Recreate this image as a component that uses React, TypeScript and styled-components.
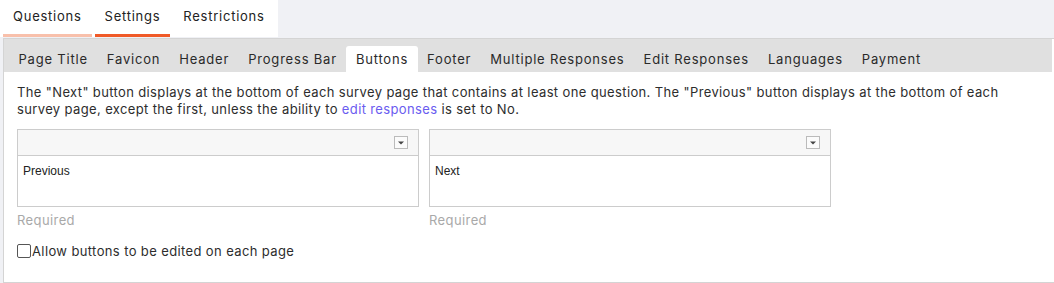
import styled, { createGlobalStyle } from "styled-components";

const GlobalStyle = createGlobalStyle`
  html, body {
    margin: 0;
    padding: 0;
    background: #f0f1f5;
    font-family: Inter, "Noto Sans", sans-serif;
    color: #333;
  }
`;

const Page = styled.div`
  width: 1054px;
  height: 283px;
  overflow: hidden;
`;

const TopTabs = styled.div`
  display: inline-flex;
  background: #fff;
  height: 37px;
  padding-right: 3px;
`;

const TopTab = styled.div<{ $active?: boolean; $dim?: boolean }>`
  margin-left: 3px;
  padding: 0 10px;
  display: flex;
  align-items: center;
  font-size: 13px;
  letter-spacing: 0.75px;
  color: #222;
  border-bottom: 3px solid
    ${(p) => (p.$active ? "#f05a28" : p.$dim ? "#f8c0ab" : "transparent")};
  padding-bottom: 2px;
`;

const Panel = styled.div`
  margin-left: 3px;
  margin-top: 1px;
  border: 1px solid #d4d4d4;
  border-right: none;
  background: #fff;
  height: 243px;
`;

const SubTabs = styled.div`
  display: flex;
  background: #e0e0e0;
  padding: 7px 0 0 5px;
  height: 26px;
  margin-right: 2px;
`;

const SubTab = styled.div<{ $active?: boolean }>`
  padding: 0 9.5px;
  display: flex;
  align-items: center;
  font-size: 13px;
  letter-spacing: 0.8px;
  color: #2a2a2a;
  background: ${(p) => (p.$active ? "#fff" : "transparent")};
  border-radius: 3px 3px 0 0;
`;

const Body = styled.div`
  padding: 12px 13px 0 13px;
`;

const Description = styled.p`
  margin: 0;
  font-size: 13px;
  line-height: 17px;
  letter-spacing: 0.37px;
  color: #2d2d2d;

  a {
    color: #6a5cf0;
    text-decoration: none;
  }
`;

const Editors = styled.div`
  display: flex;
  gap: 10px;
  margin-top: 11px;
`;

const EditorField = styled.div`
  width: 402px;
`;

const Editor = styled.div`
  border: 1px solid #ccc;
  height: 76px;
  display: flex;
  flex-direction: column;
`;

const Toolbar = styled.div`
  height: 25px;
  background: #f7f7f7;
  border-bottom: 1px solid #ccc;
  display: flex;
  justify-content: flex-end;
  align-items: center;
  padding-right: 10px;
`;

const DropButton = styled.div`
  width: 12px;
  height: 11px;
  border: 1px solid #bbb;
  background: #fbfbfb;
  display: flex;
  align-items: center;
  justify-content: center;
`;

const EditorContent = styled.div`
  padding: 8px 5px;
  font-family: "Liberation Sans", Arial, sans-serif;
  font-size: 12px;
  color: #222;
`;

const Hint = styled.div`
  margin-top: 5px;
  font-size: 13px;
  letter-spacing: 0.4px;
  color: #a9a9a9;
`;

const CheckRow = styled.label`
  display: flex;
  align-items: center;
  margin-top: 15px;
  font-size: 13px;
  letter-spacing: 0.38px;
  color: #2d2d2d;
`;

const Box = styled.span`
  width: 12px;
  height: 12px;
  border: 1px solid #555;
  border-radius: 2px;
  background: #fff;
  margin-right: 1px;
`;

const Caret = () => (
  <svg width="6" height="4" viewBox="0 0 6 4">
    <path d="M0 0.5h6L3 3.5z" fill="#444" />
  </svg>
);

const subTabs = [
  "Page Title",
  "Favicon",
  "Header",
  "Progress Bar",
  "Buttons",
  "Footer",
  "Multiple Responses",
  "Edit Responses",
  "Languages",
  "Payment",
];

const App = () => {
  return (
    <Page>
      <GlobalStyle />
      <TopTabs>
        <TopTab $dim>Questions</TopTab>
        <TopTab $active>Settings</TopTab>
        <TopTab>Restrictions</TopTab>
      </TopTabs>
      <Panel>
        <SubTabs>
          {subTabs.map((t) => (
            <SubTab key={t} $active={t === "Buttons"}>
              {t}
            </SubTab>
          ))}
        </SubTabs>
        <Body>
          <Description>
            The "Next" button displays at the bottom of each survey page that
            contains at least one question. The "Previous" button displays at
            the bottom of each survey page, except the first, unless the ability
            to <a href="#">edit responses</a> is set to No.
          </Description>
          <Editors>
            {["Previous", "Next"].map((label) => (
              <EditorField key={label}>
                <Editor>
                  <Toolbar>
                    <DropButton>
                      <Caret />
                    </DropButton>
                  </Toolbar>
                  <EditorContent>{label}</EditorContent>
                </Editor>
                <Hint>Required</Hint>
              </EditorField>
            ))}
          </Editors>
          <CheckRow>
            <Box />
            Allow buttons to be edited on each page
          </CheckRow>
        </Body>
      </Panel>
    </Page>
  );
};

export default App;
